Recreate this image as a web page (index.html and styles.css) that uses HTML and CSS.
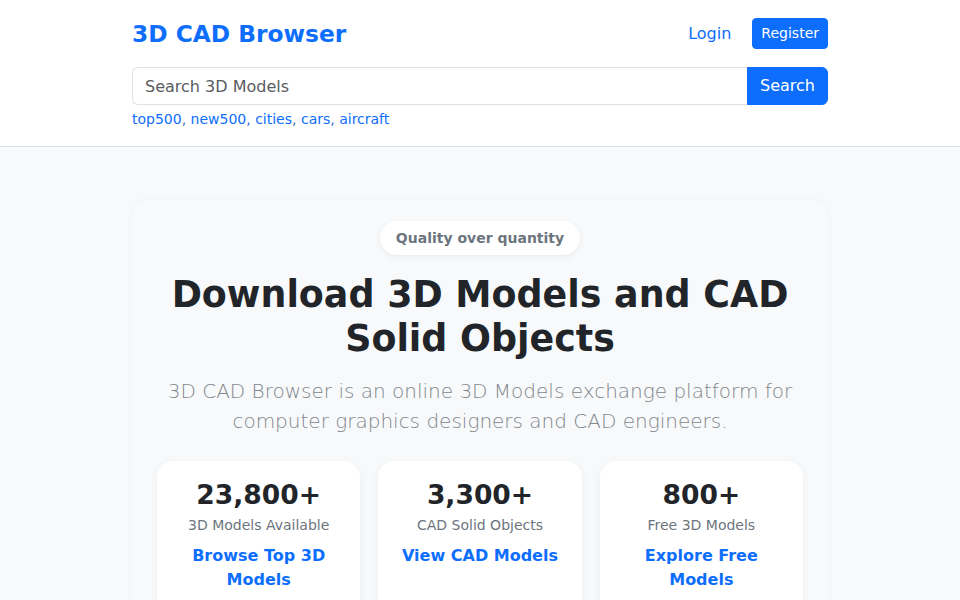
FILE: index.html
```html
<!doctype html>
<html>

	<head>
		<title>3D CAD Browser</title>
		<meta charset="utf-8" />
		<link rel="stylesheet" href="styles.css">
	</head>

	<body>

		<header class="site-header">
			<div class="container">
				<div class="top-row">
					<a class="brand" href="#">3D CAD Browser</a>
					<nav class="user-nav">
						<a class="login" href="#">Login</a>
						<a class="btn btn-sm" href="#">Register</a>
					</nav>
				</div>
				<form class="search">
					<input type="text" placeholder="Search 3D Models" />
					<button type="button" class="btn">Search</button>
				</form>
				<p class="tags">
					<a href="#">top500</a>, <a href="#">new500</a>, <a href="#">cities</a>, <a href="#">cars</a>, <a href="#">aircraft</a>
				</p>
			</div>
		</header>

		<main class="main">
			<div class="container">
				<section class="hero">
					<span class="badge">Quality over quantity</span>
					<h1>Download 3D Models and CAD Solid Objects</h1>
					<p class="lead">3D CAD Browser is an online 3D Models exchange platform for computer graphics designers and CAD engineers.</p>

					<div class="stats">
						<div class="stat">
							<h3>23,800+</h3>
							<p>3D Models Available</p>
							<a href="#">Browse Top 3D Models</a>
						</div>
						<div class="stat">
							<h3>3,300+</h3>
							<p>CAD Solid Objects</p>
							<a href="#">View CAD Models</a>
						</div>
						<div class="stat">
							<h3>800+</h3>
							<p>Free 3D Models</p>
							<a href="#">Explore Free Models</a>
						</div>
					</div>
				</section>
			</div>
		</main>

	</body>

</html>
```

FILE: styles.css
```css
* {
	box-sizing: border-box;
}

body {
	margin: 0;
	background: #f8f9fa;
	color: #212529;
	font-family: "DejaVu Sans", sans-serif;
	font-size: 16px;
	line-height: 1.5;
}

a {
	color: #0d6efd;
	text-decoration: none;
}

.container {
	width: 696px;
	margin: 0 auto;
}

/* header */

.site-header {
	background: #fff;
	border-bottom: 1px solid #dee2e6;
	padding: 18px 0 16px;
}

.top-row {
	display: flex;
	align-items: center;
	justify-content: space-between;
	height: 31px;
}

.brand {
	font-size: 23.3px;
	font-weight: bold;
	line-height: 1.2;
}

.user-nav {
	display: flex;
	align-items: center;
	gap: 21px;
}

.btn {
	background: #0d6efd;
	color: #fff;
	border: 1px solid #0d6efd;
	border-radius: 6px;
	font-family: inherit;
	font-size: 16px;
	line-height: 1.5;
	padding: 6px 12px;
	cursor: pointer;
}

.btn-sm {
	font-size: 14px;
	padding: 4px 8px;
	border-radius: 4px;
}

.search {
	display: flex;
	margin: 18px 0 0;
}

.search input {
	flex: 1;
	height: 38px;
	border: 1px solid #dee2e6;
	border-right: none;
	border-radius: 6px 0 0 6px;
	padding: 6px 12px;
	font-family: inherit;
	font-size: 16px;
	color: #212529;
}

.search input::placeholder {
	color: #595c5f;
}

.search .btn {
	height: 38px;
	border-radius: 0 6px 6px 0;
}

.tags {
	margin: 4px 0 0;
	font-size: 14px;
	color: #3a6fbf;
}

/* hero */

.main {
	padding-top: 53px;
}

.hero {
	background: #f8f9fa;
	border-radius: 16px;
	box-shadow: 0 0 8px rgba(0, 0, 0, 0.03);
	padding: 21px 25px 40px;
	text-align: center;
}

.badge {
	display: inline-block;
	background: #fff;
	color: #6c757d;
	font-size: 14px;
	font-weight: bold;
	line-height: 22px;
	padding: 6px 16px;
	border-radius: 50px;
	box-shadow: 0 2px 6px rgba(0, 0, 0, 0.06);
}

.hero h1 {
	margin: 18px 0 16px;
	font-size: 36.4px;
	line-height: 1.2;
	font-weight: bold;
}

.lead {
	margin: 0 0 25px;
	font-size: 20px;
	font-weight: 300;
	color: #80878e;
}

.stats {
	display: grid;
	grid-template-columns: repeat(3, 1fr);
	gap: 18px;
}

.stat {
	background: #fff;
	border-radius: 16px;
	box-shadow: 0 2px 8px rgba(0, 0, 0, 0.05);
	padding: 18px 16px 20px;
}

.stat h3 {
	margin: 0 0 4px;
	font-size: 26.56px;
	line-height: 1.2;
}

.stat p {
	margin: 0 0 8px;
	font-size: 14px;
	color: #6c757d;
}

.stat a {
	display: block;
	font-weight: bold;
}
```
